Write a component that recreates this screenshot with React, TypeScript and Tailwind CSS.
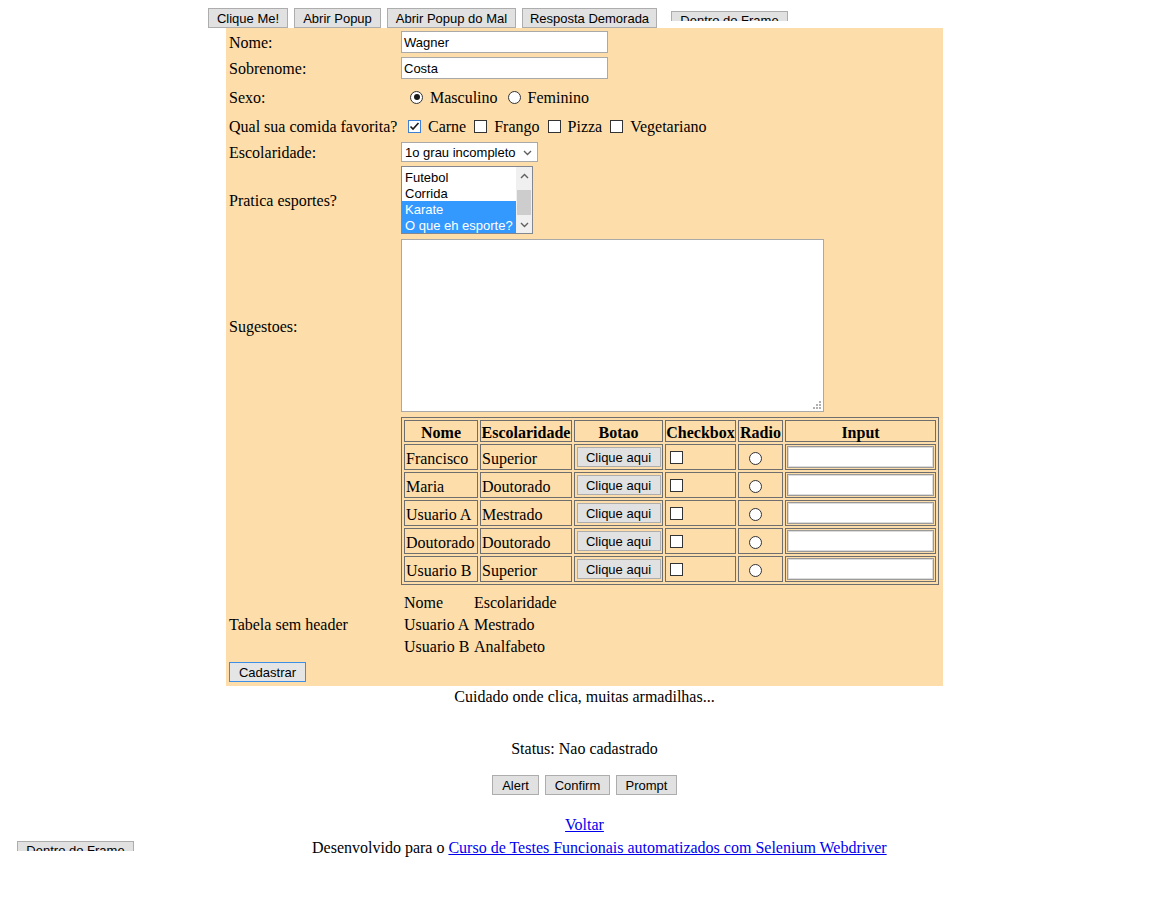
import React from "react";

const serif = "font-['Liberation_Serif','Times_New_Roman',serif]";
const sans = "font-['Liberation_Sans',Arial,sans-serif]";

const rows = [
  { nome: "Francisco", escolaridade: "Superior" },
  { nome: "Maria", escolaridade: "Doutorado" },
  { nome: "Usuario A", escolaridade: "Mestrado" },
  { nome: "Doutorado", escolaridade: "Doutorado" },
  { nome: "Usuario B", escolaridade: "Superior" },
];

function Btn({ children, className = "" }: { children: React.ReactNode; className?: string }) {
  return (
    <button
      className={`flex h-[20px] shrink-0 items-center justify-center border border-[#adadad] bg-[#e1e1e1] text-[13px] leading-none text-black ${sans} ${className}`}
    >
      {children}
    </button>
  );
}

function Check({ checked = false }: { checked?: boolean }) {
  return (
    <span
      className={`inline-flex h-[13px] w-[13px] shrink-0 items-center justify-center border bg-white ${
        checked ? "border-[#3c7fd4]" : "border-[#333333]"
      }`}
    >
      {checked && (
        <svg width="11" height="11" viewBox="0 0 11 11" fill="none">
          <path d="M1.5 5.5 L4 8 L9.5 2" stroke="#1a1a1a" strokeWidth="1.6" />
        </svg>
      )}
    </span>
  );
}

function Radio({ checked = false }: { checked?: boolean }) {
  return (
    <span className="inline-flex h-[13px] w-[13px] shrink-0 items-center justify-center rounded-full border border-[#333333] bg-white">
      {checked && <span className="h-[6px] w-[6px] rounded-full bg-[#1a1a1a]" />}
    </span>
  );
}

function FrameStub({ className = "" }: { className?: string }) {
  // iframe cortado: so aparece o topo do botao
  return (
    <div className={`h-[10px] w-[117px] shrink-0 overflow-hidden ${className}`}>
      <div className={`flex h-[20px] w-full items-center justify-center border border-[#adadad] bg-[#e1e1e1] text-[13px] ${sans}`}>
        Dentro do Frame
      </div>
    </div>
  );
}

function Chevron({ up = false }: { up?: boolean }) {
  return (
    <svg width="9" height="6" viewBox="0 0 9 6" fill="none">
      <path d={up ? "M1 5 L4.5 1.5 L8 5" : "M1 1 L4.5 4.5 L8 1"} stroke="#606060" strokeWidth="1.4" />
    </svg>
  );
}

function FormRow({ label, className, children }: { label?: string; className: string; children: React.ReactNode }) {
  return (
    <div className={`flex items-center ${className}`}>
      <div className="w-[172px] shrink-0 pt-[2px] text-[16px] leading-none">{label}</div>
      <div className="flex h-full items-center">{children}</div>
    </div>
  );
}

export default function App() {
  return (
    <div className={`min-h-[921px] w-[1169px] bg-white text-black ${serif}`}>
      {/* barra de botoes do topo */}
      <div className="flex h-[28px] items-start pl-[208px]">
        <div className="mt-[8px] flex gap-[6px]">
          <Btn className="w-[80px]">Clique Me!</Btn>
          <Btn className="w-[87px]">Abrir Popup</Btn>
          <Btn className="w-[129px]">Abrir Popup do Mal</Btn>
          <Btn className="w-[135px]">Resposta Demorada</Btn>
        </div>
        <FrameStub className="ml-[14px] mt-[11px]" />
      </div>

      {/* formulario */}
      <div className="mx-auto flex w-[717px] flex-col bg-[#fddeab] pb-[4px] pl-[3px] pt-[3px]">
        <FormRow label="Nome:" className="h-[22px]">
          <div className={`flex h-[22px] w-[207px] items-center border border-[#a9a9a9] bg-white px-[2px] pt-[1px] text-[13px] ${sans}`}>Wagner</div>
        </FormRow>
        <FormRow label="Sobrenome:" className="mt-[4px] h-[22px]">
          <div className={`flex h-[22px] w-[207px] items-center border border-[#a9a9a9] bg-white px-[2px] pt-[1px] text-[13px] ${sans}`}>Costa</div>
        </FormRow>
        <FormRow label="Sexo:" className="mt-[7px] h-[22px]">
          <div className="flex items-center pl-[9px] text-[16px]">
            <Radio checked />
            <span className="ml-[7px] mr-[10px] pt-[1px]">Masculino</span>
            <Radio />
            <span className="ml-[7px] pt-[1px]">Feminino</span>
          </div>
        </FormRow>
        <FormRow label="Qual sua comida favorita?" className="mt-[7px] h-[22px]">
          <div className="flex items-center pl-[7px] text-[16px]">
            <Check checked />
            <span className="ml-[7px] mr-[8px] pt-[1px]">Carne</span>
            <Check />
            <span className="ml-[7px] mr-[8px] pt-[1px]">Frango</span>
            <Check />
            <span className="ml-[7px] mr-[8px] pt-[1px]">Pizza</span>
            <Check />
            <span className="ml-[7px] pt-[1px]">Vegetariano</span>
          </div>
        </FormRow>
        <FormRow label="Escolaridade:" className="mt-[5px] h-[20px]">
          <div className={`flex h-[20px] w-[137px] items-center justify-between border border-[#a9a9a9] bg-white pl-[3px] pr-[5px] pt-[1px] text-[13px] ${sans}`}>
            <span>1o grau incompleto</span>
            <Chevron />
          </div>
        </FormRow>
        <FormRow label="Pratica esportes?" className="mt-[4px] h-[68px]">
          <div className={`flex h-[68px] w-[132px] border border-[#828790] bg-white text-[13px] ${sans}`}>
            <div className="flex flex-1 flex-col pt-[2px]">
              {["Futebol", "Corrida", "Karate", "O que eh esporte?"].map((s, i) => (
                <div
                  key={s}
                  className={`flex h-[16px] items-center whitespace-nowrap pl-[3px] pt-[1px] ${i >= 2 ? "bg-[#3399ff] text-white" : ""}`}
                >
                  {s}
                </div>
              ))}
            </div>
            <div className="flex w-[16px] flex-col items-center bg-[#f0f0f0]">
              <div className="flex h-[17px] items-center">
                <Chevron up />
              </div>
              <div className="mt-[6px] h-[25px] w-[14px] bg-[#cdcdcd]" />
              <div className="mt-auto flex h-[17px] items-center">
                <Chevron />
              </div>
            </div>
          </div>
        </FormRow>
        <FormRow label="Sugestoes:" className="mt-[5px] h-[173px]">
          <div className="flex h-[173px] w-[423px] items-end justify-end border border-[#a9a9a9] bg-white p-[2px]">
            <svg width="8" height="8" viewBox="0 0 8 8">
              <rect x="6" y="0" width="2" height="2" fill="#b0b0b0" />
              <rect x="3" y="3" width="2" height="2" fill="#b0b0b0" />
              <rect x="6" y="3" width="2" height="2" fill="#b0b0b0" />
              <rect x="0" y="6" width="2" height="2" fill="#b0b0b0" />
              <rect x="3" y="6" width="2" height="2" fill="#b0b0b0" />
              <rect x="6" y="6" width="2" height="2" fill="#b0b0b0" />
            </svg>
          </div>
        </FormRow>
        <FormRow className="mt-[5px] h-[168px]">
          <div className="grid w-[538px] grid-cols-[74px_92px_89px_71px_45px_151px] grid-rows-[22px_repeat(5,26px)] gap-[2px] border border-[#6e6e6e] p-[2px] text-[16px]">
            {["Nome", "Escolaridade", "Botao", "Checkbox", "Radio", "Input"].map((h) => (
              <div key={h} className="flex items-center justify-center whitespace-nowrap border border-[#6e6e6e] pt-[3px] font-bold">
                {h}
              </div>
            ))}
            {rows.map((r, i) => (
              <React.Fragment key={i}>
                <div className="flex items-center whitespace-nowrap border border-[#6e6e6e] px-[1px] pt-[3px]">{r.nome}</div>
                <div className="flex items-center whitespace-nowrap border border-[#6e6e6e] px-[1px] pt-[3px]">{r.escolaridade}</div>
                <div className="flex items-center justify-center border border-[#6e6e6e]">
                  <Btn className="w-[84px]">Clique aqui</Btn>
                </div>
                <div className="flex items-center border border-[#6e6e6e] pl-[4px]">
                  <Check />
                </div>
                <div className="flex items-center border border-[#6e6e6e] pl-[10px] pt-[2px]">
                  <Radio />
                </div>
                <div className="flex items-center border border-[#6e6e6e] px-[1px]">
                  <div className="h-[22px] w-full border border-[#9a9a9a] bg-white shadow-[inset_0_0_0_1px_#dcdcdc]" />
                </div>
              </React.Fragment>
            ))}
          </div>
        </FormRow>
        <FormRow label="Tabela sem header" className="mt-[6px] h-[66px]">
          <div className="grid grid-cols-[68px_auto] grid-rows-[22px_22px_22px] gap-x-[2px] pl-[3px] pt-[2px] text-[16px]">
            <div className="flex items-center">Nome</div>
            <div className="flex items-center">Escolaridade</div>
            <div className="flex items-center whitespace-nowrap">Usuario A</div>
            <div className="flex items-center">Mestrado</div>
            <div className="flex items-center whitespace-nowrap">Usuario B</div>
            <div className="flex items-center">Analfabeto</div>
          </div>
        </FormRow>
        <div className="mt-[5px] flex h-[20px]">
          <button className={`h-[20px] w-[77px] border border-[#3d8ee6] bg-[#e5e5e5] text-[13px] leading-none ${sans}`}>Cadastrar</button>
        </div>
      </div>

      {/* rodape */}
      <div className="flex h-[20px] items-center justify-center pt-[1px] text-[16px]">Cuidado onde clica, muitas armadilhas...</div>
      <div className="mt-[32px] flex h-[20px] items-center justify-center pt-[1px] text-[16px]">Status: Nao cadastrado</div>
      <div className="mt-[17px] flex justify-center gap-[6px]">
        <Btn className="w-[47px]">Alert</Btn>
        <Btn className="w-[65px]">Confirm</Btn>
        <Btn className="w-[61px]">Prompt</Btn>
      </div>
      <div className="mt-[19px] flex h-[20px] items-center justify-center pt-[1px] text-[16px]">
        <a href="#" className="text-[#0000ee] underline">Voltar</a>
      </div>
      <div className="mt-[3px] flex h-[20px] items-start">
        <FrameStub className="ml-[17px] mt-[4px]" />
        <div className="ml-[178px] flex h-[20px] items-center whitespace-nowrap pt-[1px] text-[16px]">
          Desenvolvido para o&nbsp;
          <a href="#" className="text-[#0000ee] underline">
            Curso de Testes Funcionais automatizados com Selenium Webdriver
          </a>
        </div>
      </div>
    </div>
  );
}
